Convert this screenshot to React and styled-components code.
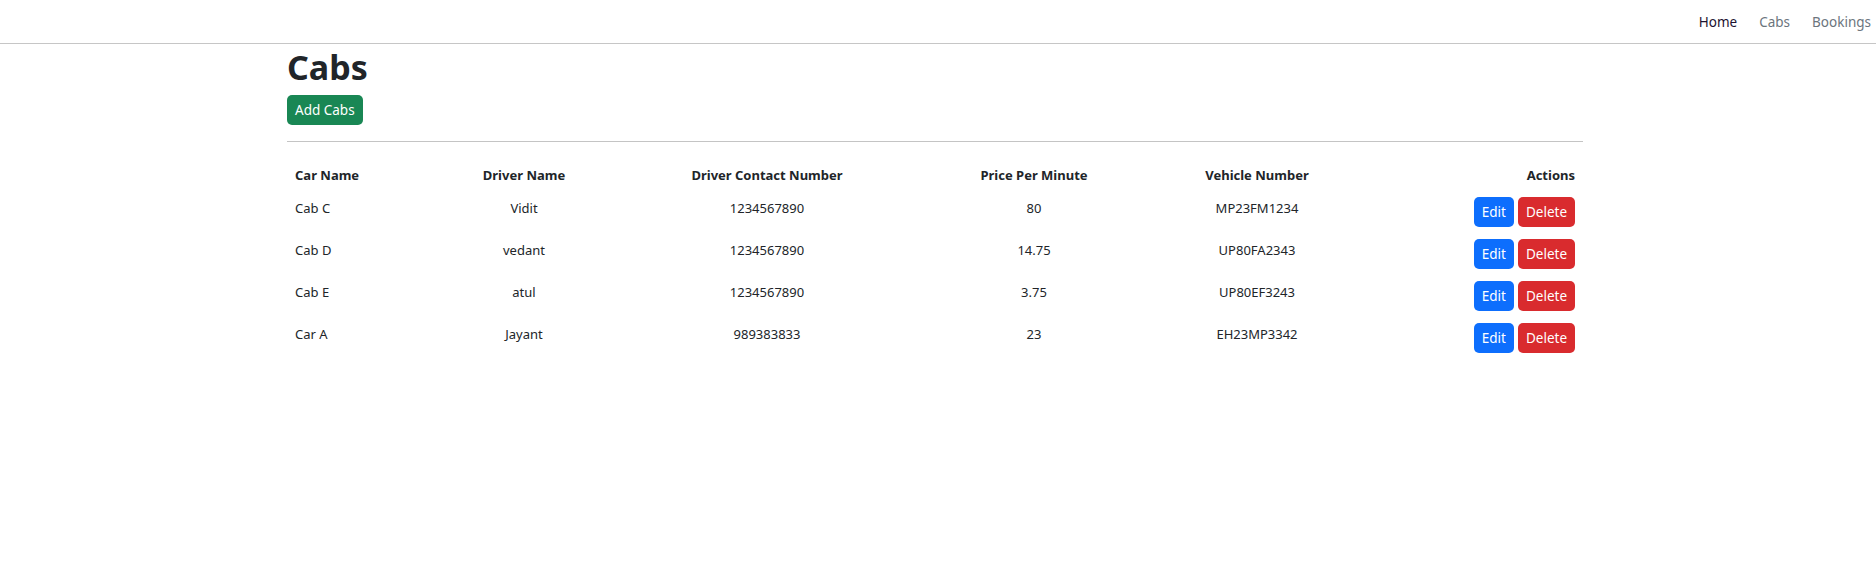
import React from "react";
import styled, { createGlobalStyle } from "styled-components";

const GlobalStyle = createGlobalStyle`
  body {
    margin: 0;
    background: #ffffff;
    color: #212529;
    font-family: "Noto Sans", "Open Sans", sans-serif;
  }
`;

const NavBar = styled.nav`
  height: 43px;
  border-bottom: 1px solid #c6c6c6;
  display: flex;
  justify-content: flex-end;
  align-items: center;
  padding-right: 5px;
`;

const NavLink = styled.a`
  font-size: 13.5px;
  padding: 0 11px;
  color: ${(p) => (p.active ? "#1d1230" : "#6c757d")};
  text-decoration: none;
  &:last-child {
    padding-right: 0;
  }
`;

const Container = styled.main`
  width: 1296px;
  margin-left: calc(50% - 651px);
`;

const Title = styled.h1`
  font-size: 34px;
  font-weight: 700;
  line-height: 1.2;
  margin: 3px 0 7px;
`;

const Button = styled.button`
  font-family: inherit;
  font-size: 13.5px;
  line-height: 20px;
  height: 30px;
  padding: 0 8px;
  border: none;
  border-radius: 5px;
  color: #ffffff;
  background: ${(p) => p.bg};
  cursor: pointer;
`;

const Divider = styled.hr`
  border: none;
  border-top: 1px solid #c4c4c4;
  margin: 16px 0 15px;
`;

const Table = styled.table`
  width: 100%;
  border-collapse: collapse;
  table-layout: fixed;
  font-size: 13px;
`;

const Th = styled.th`
  font-weight: 700;
  white-space: nowrap;
  text-align: ${(p) => p.align || "center"};
  padding: 6px ${(p) => (p.align ? "8px" : "0")};
  line-height: 24px;
`;

const Td = styled.td`
  text-align: ${(p) => p.align || "center"};
  white-space: nowrap;
  vertical-align: top;
  padding: 4px ${(p) => (p.align ? "8px" : "0")} 8px;
  line-height: 22px;
`;

const Actions = styled.div`
  display: flex;
  justify-content: flex-end;
  gap: 4px;
`;

const cabs = [
  { car: "Cab C", driver: "Vidit", contact: "1234567890", price: "80", vehicle: "MP23FM1234" },
  { car: "Cab D", driver: "vedant", contact: "1234567890", price: "14.75", vehicle: "UP80FA2343" },
  { car: "Cab E", driver: "atul", contact: "1234567890", price: "3.75", vehicle: "UP80EF3243" },
  { car: "Car A", driver: "Jayant", contact: "989383833", price: "23", vehicle: "EH23MP3342" },
];

const widths = [153, 168, 318, 216, 230, 211];

const App = () => {
  return (
    <>
      <GlobalStyle />
      <NavBar>
        <NavLink href="#" active>
          Home
        </NavLink>
        <NavLink href="#">Cabs</NavLink>
        <NavLink href="#">Bookings</NavLink>
      </NavBar>
      <Container>
        <Title>Cabs</Title>
        <Button bg="#198754">Add Cabs</Button>
        <Divider />
        <Table>
          <colgroup>
            {widths.map((w, i) => (
              <col key={i} style={{ width: w }} />
            ))}
          </colgroup>
          <thead>
            <tr>
              <Th align="left">Car Name</Th>
              <Th>Driver Name</Th>
              <Th>Driver Contact Number</Th>
              <Th>Price Per Minute</Th>
              <Th>Vehicle Number</Th>
              <Th align="right">Actions</Th>
            </tr>
          </thead>
          <tbody>
            {cabs.map((cab, index) => (
              <tr key={index}>
                <Td align="left">{cab.car}</Td>
                <Td>{cab.driver}</Td>
                <Td>{cab.contact}</Td>
                <Td>{cab.price}</Td>
                <Td>{cab.vehicle}</Td>
                <Td align="right">
                  <Actions>
                    <Button bg="#0d6efd">Edit</Button>
                    <Button bg="#d92b2e">Delete</Button>
                  </Actions>
                </Td>
              </tr>
            ))}
          </tbody>
        </Table>
      </Container>
    </>
  );
};

export default App;
